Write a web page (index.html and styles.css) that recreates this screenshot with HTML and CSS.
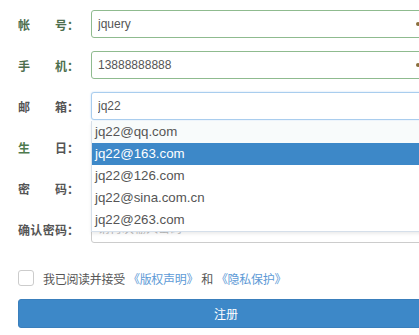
FILE: index.html
```html
<!DOCTYPE html>
<html lang="zh-CN">
<head>
    <meta charset="UTF-8">
    <meta name="viewport" content="width=device-width, initial-scale=1.0">
    <title>注册</title>
    <link rel="stylesheet" href="styles.css">
</head>
<body>
    <div class="form">
        <div class="row">
            <label class="label ok" for="account"><span class="name"><i>帐</i><i>号</i></span>：</label>
            <div class="field ok">
                <input type="text" id="account" value="jquery">
                <span class="mark"></span>
            </div>
        </div>

        <div class="row">
            <label class="label ok" for="phone"><span class="name"><i>手</i><i>机</i></span>：</label>
            <div class="field ok">
                <input type="text" id="phone" value="13888888888">
                <span class="mark"></span>
            </div>
        </div>

        <div class="row">
            <label class="label" for="email"><span class="name"><i>邮</i><i>箱</i></span>：</label>
            <div class="field focus">
                <input type="text" id="email" value="jq22">
                <ul class="suggest">
                    <li>jq22@qq.com</li>
                    <li class="active">jq22@163.com</li>
                    <li>jq22@126.com</li>
                    <li>jq22@sina.com.cn</li>
                    <li>jq22@263.com</li>
                </ul>
            </div>
        </div>

        <div class="row">
            <label class="label" for="birthday"><span class="name"><i class="ok-char">生</i><i>日</i></span>：</label>
            <div class="field">
                <input type="text" id="birthday">
            </div>
        </div>

        <div class="row">
            <label class="label" for="password"><span class="name"><i>密</i><i>码</i></span>：</label>
            <div class="field">
                <input type="password" id="password">
            </div>
        </div>

        <div class="row">
            <label class="label" for="confirm"><span class="name"><i>确</i><i>认</i><i>密</i><i>码</i></span>：</label>
            <div class="field">
                <input type="password" id="confirm" placeholder="请再次输入密码">
            </div>
        </div>

        <div class="agree">
            <span class="box"></span>
            <span class="agree-text">我已阅读并接受 <a href="#">《版权声明》</a> 和 <a href="#">《隐私保护》</a></span>
        </div>

        <button class="submit">注册</button>
    </div>
</body>
</html>
```

FILE: styles.css
```css
body {
    margin: 0;
    overflow: hidden;
    font-family: "Liberation Sans", "Noto Sans CJK SC", sans-serif;
    color: #555;
    background: #fff;
}
.form {
    width: 440px;
    padding: 10px 0 0 18px;
}
.row {
    display: flex;
    align-items: center;
    height: 28px;
    margin-bottom: 13px;
}
.label {
    display: flex;
    width: 73px;
    flex: none;
    font-size: 12px;
    font-weight: bold;
    color: #555;
}
.label.ok {
    color: #4e6f4e;
}
.name {
    display: flex;
    justify-content: space-between;
    width: 49px;
}
.name i {
    font-style: normal;
}
.name .ok-char {
    color: #4e7a4e;
}
.field {
    position: relative;
    width: 345px;
    flex: none;
}
input {
    box-sizing: border-box;
    width: 100%;
    height: 28px;
    padding: 0 6px;
    border: 1px solid #ccc;
    border-radius: 3px;
    font-family: inherit;
    font-size: 12px;
    color: #555;
    outline: none;
}
input::placeholder {
    color: #bbb;
}
.field.ok input {
    border-color: #8fbb8f;
}
.field.focus input {
    border-color: #a9cdee;
    box-shadow: 0 0 2px rgba(102, 165, 230, 0.4);
}
.mark {
    position: absolute;
    left: 325px;
    top: 12px;
    width: 4px;
    height: 4px;
    border-radius: 50%;
    background: #8a6d3b;
}
.suggest {
    position: absolute;
    top: 29px;
    left: 0;
    right: 0;
    z-index: 10;
    margin: 0;
    padding: 0;
    list-style: none;
    background: #fff;
    border: 1px solid #d5dfea;
    border-top: none;
    box-shadow: 0 2px 3px rgba(0, 0, 0, 0.08);
}
.suggest li {
    height: 22px;
    line-height: 22px;
    padding-left: 3px;
    font-size: 13.3px;
    color: #555;
}
.suggest li:first-child {
    background: #f8fbfb;
}
.suggest li.active {
    background: #3d88c8;
    color: #fff;
}
.agree {
    display: flex;
    align-items: center;
    margin-top: 27px;
    height: 16px;
}
.box {
    box-sizing: border-box;
    flex: none;
    width: 16px;
    height: 16px;
    margin-right: 9px;
    border: 1px solid #ccc;
    border-radius: 3px;
    background: #fff;
}
.agree-text {
    font-size: 12px;
    letter-spacing: -0.3px;
    color: #555;
}
.agree a {
    color: #5d9ad6;
    text-decoration: none;
}
.submit {
    display: block;
    width: 416px;
    height: 29px;
    margin-top: 13px;
    border: 1px solid #3a7fbc;
    border-radius: 3px;
    background: #3d88c8;
    color: #fff;
    font-family: inherit;
    font-size: 12px;
    cursor: pointer;
}
```
